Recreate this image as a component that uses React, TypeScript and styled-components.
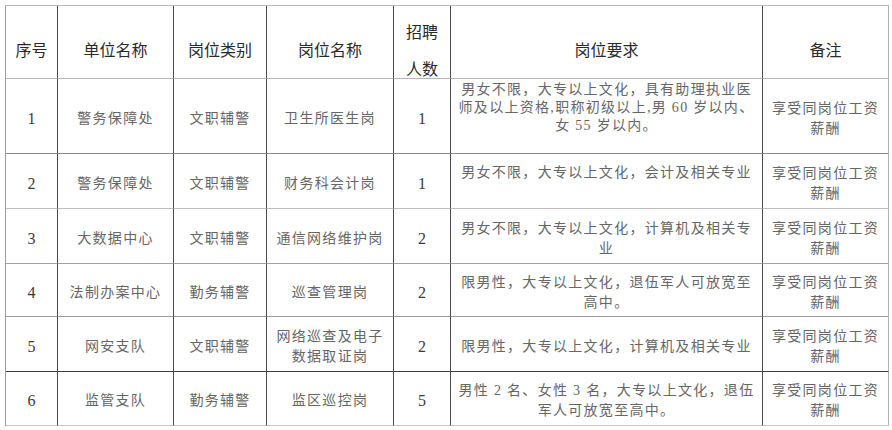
import React from "react";
import styled, { createGlobalStyle } from "styled-components";

interface Post {
    no: string;
    unit: string;
    kind: string;
    post: string[];
    count: string;
    req: string[];
    note: string[];
    height: number;
    line: string;
    raise?: boolean;
}

const columns = [
    { title: ["序号"], width: 52 },
    { title: ["单位名称"], width: 116 },
    { title: ["岗位类别"], width: 93 },
    { title: ["岗位名称"], width: 127 },
    { title: ["招聘", "人数"], width: 57 },
    { title: ["岗位要求"], width: 312 },
    { title: ["备注"], width: 126 },
];

const note = ["享受同岗位工资", "薪酬"];

const posts: Post[] = [
    {
        no: "1",
        unit: "警务保障处",
        kind: "文职辅警",
        post: ["卫生所医生岗"],
        count: "1",
        req: ["男女不限，大专以上文化，具有助理执业医", "师及以上资格,职称初级以上,男 60 岁以内、", "女 55 岁以内。"],
        note,
        height: 75,
        line: "#8a8a8a",
        raise: true,
    },
    {
        no: "2",
        unit: "警务保障处",
        kind: "文职辅警",
        post: ["财务科会计岗"],
        count: "1",
        req: ["男女不限，大专以上文化，会计及相关专业"],
        note,
        height: 55,
        line: "#bdbdbd",
        raise: true,
    },
    {
        no: "3",
        unit: "大数据中心",
        kind: "文职辅警",
        post: ["通信网络维护岗"],
        count: "2",
        req: ["男女不限，大专以上文化，计算机及相关专", "业"],
        note,
        height: 55,
        line: "#a3a3a3",
    },
    {
        no: "4",
        unit: "法制办案中心",
        kind: "勤务辅警",
        post: ["巡查管理岗"],
        count: "2",
        req: ["限男性，大专以上文化，退伍军人可放宽至", "高中。"],
        note,
        height: 53,
        line: "#9a9a9a",
    },
    {
        no: "5",
        unit: "网安支队",
        kind: "文职辅警",
        post: ["网络巡查及电子", "数据取证岗"],
        count: "2",
        req: ["限男性，大专以上文化，计算机及相关专业"],
        note,
        height: 55,
        line: "#3c3c3c",
    },
    {
        no: "6",
        unit: "监管支队",
        kind: "勤务辅警",
        post: ["监区巡控岗"],
        count: "5",
        req: ["男性 2 名、女性 3 名，大专以上文化，退伍", "军人可放宽至高中。"],
        note,
        height: 54,
        line: "#c4c4c4",
    },
];

function Lines({ items }: { items: string[] }) {
    return (
        <>
            {items.map((t, i) => (
                <Line key={i}>{t}</Line>
            ))}
        </>
    );
}

export default function App() {
    return (
        <>
            <GlobalStyle />
            <Page>
                <Table>
                    <thead>
                        <HeadRow>
                            {columns.map((c, i) => (
                                <HeadCell key={i} $w={c.width} $last={i === columns.length - 1}>
                                    {c.title.length > 1 ? (
                                        <Stack>
                                            {c.title.map((t) => (
                                                <span key={t}>{t}</span>
                                            ))}
                                        </Stack>
                                    ) : (
                                        c.title[0]
                                    )}
                                </HeadCell>
                            ))}
                        </HeadRow>
                    </thead>
                    <tbody>
                        {posts.map((p) => (
                            <Row key={p.no} $h={p.height} $line={p.line}>
                                <Cell $num>{p.no}</Cell>
                                <Cell>{p.unit}</Cell>
                                <Cell>{p.kind}</Cell>
                                <Cell>
                                    <Lines items={p.post} />
                                </Cell>
                                <Cell $num>{p.count}</Cell>
                                <Cell $raise={p.raise} $tight={p.req.length > 2}>
                                    <Lines items={p.req} />
                                </Cell>
                                <Cell $last>
                                    <Lines items={p.note} />
                                </Cell>
                            </Row>
                        ))}
                    </tbody>
                </Table>
            </Page>
        </>
    );
}

const GlobalStyle = createGlobalStyle`
    html, body {
        margin: 0;
        padding: 0;
        background: #ffffff;
    }
`;

const Page = styled.div`
    padding: 5px 0 0 5px;
`;

const Table = styled.table`
    width: 884px;
    box-sizing: border-box;
    table-layout: fixed;
    border-collapse: separate;
    border-spacing: 0;
    border-top: 1px solid #b8b8b8;
    border-left: 1px solid #9c9c9c;
`;

const HeadRow = styled.tr`
    height: 73px;
`;

const HeadCell = styled.th<{ $w: number; $last?: boolean }>`
    width: ${(p) => p.$w}px;
    box-sizing: border-box;
    padding: 14px 0 0;
    font: 400 16px/20px "Noto Sans CJK SC", sans-serif;
    color: #2a2a2a;
    text-align: center;
    vertical-align: middle;
    border-right: 1px solid ${(p) => (p.$last ? "#b4b4b4" : "#4a4a4a")};
    border-bottom: 1px solid #b5b5b5;
`;

const Stack = styled.span`
    display: flex;
    flex-direction: column;
    align-items: center;
    gap: 17px;
`;

const Row = styled.tr<{ $h: number; $line: string }>`
    height: ${(p) => p.$h}px;

    > td {
        border-bottom: 1px solid ${(p) => p.$line};
    }
`;

const Cell = styled.td<{ $last?: boolean; $raise?: boolean; $tight?: boolean; $num?: boolean }>`
    box-sizing: border-box;
    padding: ${(p) => (p.$raise ? "0 0 16px" : "5px 0 0")};
    text-align: center;
    vertical-align: middle;
    font: 400 ${(p) => (p.$num ? 16 : 14)}px/${(p) => (p.$tight ? 18 : 20)}px "Liberation Serif", "Noto Sans CJK SC", serif;
    letter-spacing: ${(p) => (p.$num ? 0 : 1.3)}px;
    color: ${(p) => (p.$num ? "#3a3a3a" : "#666666")};
    white-space: nowrap;
    overflow: hidden;
    border-right: 1px solid ${(p) => (p.$last ? "#b4b4b4" : "#4a4a4a")};
`;

const Line = styled.div`
    display: block;
`;
